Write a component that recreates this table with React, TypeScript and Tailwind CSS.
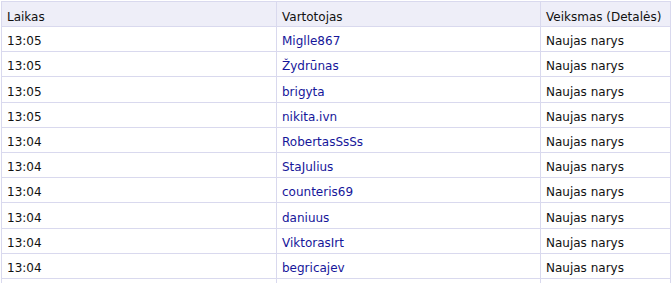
import React from "react";

const rows: [string, string, string][] = [
  ["13:05", "Miglle867", "Naujas narys"],
  ["13:05", "Žydrūnas", "Naujas narys"],
  ["13:05", "brigyta", "Naujas narys"],
  ["13:05", "nikita.ivn", "Naujas narys"],
  ["13:04", "RobertasSsSs", "Naujas narys"],
  ["13:04", "StaJulius", "Naujas narys"],
  ["13:04", "counteris69", "Naujas narys"],
  ["13:04", "daniuus", "Naujas narys"],
  ["13:04", "ViktorasIrt", "Naujas narys"],
  ["13:04", "begricajev", "Naujas narys"],
  ["", "", ""],
];

export default function App() {
  return (
    <div
      className="bg-white pt-px pl-px w-[672px] h-[283px] overflow-hidden text-[12px] text-[#111111]"
      style={{ fontFamily: '"DejaVu Sans", Verdana, sans-serif' }}
    >
      <table className="border-collapse table-fixed w-[669px]">
        <colgroup>
          <col className="w-[275px]" />
          <col className="w-[264px]" />
          <col className="w-[130px]" />
        </colgroup>
        <thead>
          <tr className="h-[25px] bg-[#eeeef8]">
            <th className="border border-[#d9d9ee] px-[5px] pb-[2px] align-bottom text-left font-normal leading-[14px]">Laikas</th>
            <th className="border border-[#d9d9ee] px-[5px] pb-[2px] align-bottom text-left font-normal leading-[14px]">Vartotojas</th>
            <th className="border border-[#d9d9ee] px-[5px] pb-[2px] align-bottom text-left font-normal leading-[14px] whitespace-nowrap">Veiksmas (Detalės)</th>
          </tr>
        </thead>
        <tbody>
          {rows.map(([t, u, a], i) => (
            <tr key={i} className="h-[25.2px]">
              <td className="border border-[#d9d9ee] px-[5px] pb-[3px] align-bottom leading-[14px]">{t}</td>
              <td className="border border-[#d9d9ee] px-[5px] pb-[3px] align-bottom leading-[14px]">
                <a href="#" className="text-[#16169a] no-underline">{u}</a>
              </td>
              <td className="border border-[#d9d9ee] px-[5px] pb-[3px] align-bottom leading-[14px] whitespace-nowrap">{a}</td>
            </tr>
          ))}
        </tbody>
      </table>
    </div>
  );
}
